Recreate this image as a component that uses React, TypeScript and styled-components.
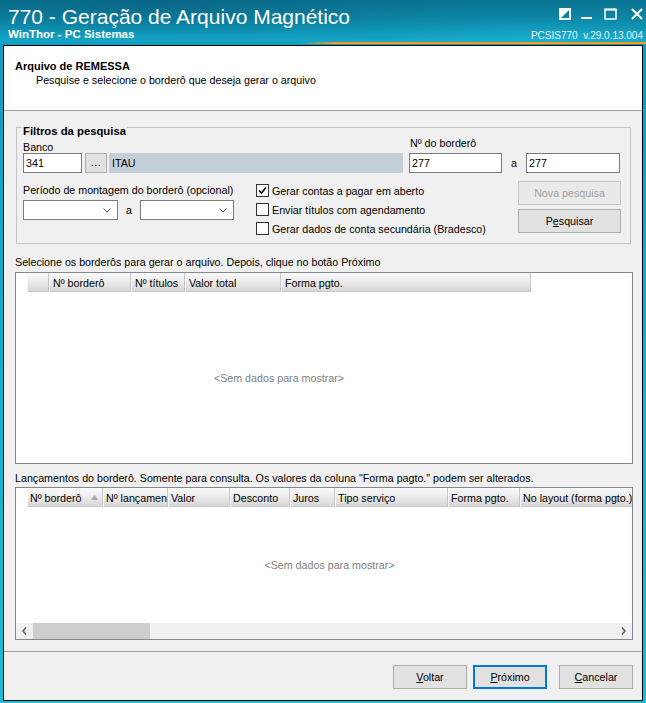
import React from 'react';
import styled, { createGlobalStyle } from 'styled-components';

const GlobalStyle = createGlobalStyle`
  html, body {
    margin: 0;
    padding: 0;
  }
  body {
    font-family: "Liberation Sans", Arial, sans-serif;
    font-size: 10.7px;
    color: #000;
    background: #f0f0f0;
  }
  * {
    box-sizing: border-box;
  }
`;

const Window = styled.div`
  width: 646px;
  height: 703px;
  display: flex;
  flex-direction: column;
  overflow: hidden;
  background: linear-gradient(180deg, #0e9cc0 0%, #12b3d1 60%, #19bdd6 100%);
`;

const TitleBar = styled.div`
  height: 42px;
  flex-shrink: 0;
  display: flex;
  justify-content: space-between;
  color: #fff;
  background:
    radial-gradient(ellipse 420px 46px at 150px 2px, rgba(8, 92, 122, 0.55), transparent 75%),
    radial-gradient(ellipse 260px 40px at 540px 46px, rgba(40, 190, 222, 0.45), transparent 75%),
    linear-gradient(180deg, #0b7393 0%, #0d8aab 55%, #14a6c6 100%);
`;

const TitleText = styled.div`
  padding: 5px 0 0 8px;
  display: flex;
  flex-direction: column;
`;

const AppTitle = styled.div`
  font-size: 21px;
  line-height: 23px;
  white-space: nowrap;
`;

const AppVendor = styled.div`
  font-size: 11.5px;
  line-height: 13px;
  font-weight: bold;
`;

const TitleSide = styled.div`
  padding: 8px 3px 0 0;
  display: flex;
  flex-direction: column;
  align-items: flex-end;
`;

const WinButtons = styled.div`
  height: 12px;
  display: flex;
  align-items: flex-start;
`;

const WinIcon = styled.svg<{ $gap: number }>`
  display: block;
  margin-left: ${(p) => p.$gap}px;
`;

const Version = styled.div`
  margin-top: 10px;
  font-size: 10px;
  line-height: 12px;
  color: #e6f6fa;
  white-space: pre;
`;

const OrangeStrip = styled.div`
  height: 2px;
  flex-shrink: 0;
  background: linear-gradient(90deg, transparent 0, transparent 300px, #f39a1f 335px, #f39a1f 100%);
`;

const Client = styled.div`
  flex: 1;
  margin: 1px 3px 2px;
  border: 1px solid #000;
  background: #f0f0f0;
  display: flex;
  flex-direction: column;
`;

const Header = styled.div`
  height: 65px;
  flex-shrink: 0;
  background: #fff;
  border-bottom: 1px solid #a0a0a0;
  padding: 13px 0 0 11px;
`;

const HeaderTitle = styled.div`
  font-size: 11px;
  font-weight: bold;
  line-height: 14px;
`;

const HeaderHint = styled.div`
  margin-left: 21px;
  line-height: 14px;
`;

const Body = styled.div`
  padding: 0 9px 0 11px;
  display: flex;
  flex-direction: column;
`;

const GroupBox = styled.div`
  position: relative;
  height: 117px;
  margin: 16px 2px 0 1px;
  padding: 10px 9px 0 6px;
  border: 1px solid #c4c4c4;
`;

const GroupLegend = styled.span`
  position: absolute;
  top: -4px;
  left: 5px;
  padding: 0 1px;
  background: #f0f0f0;
  font-size: 11.3px;
  font-weight: bold;
  line-height: 14px;
`;

const FieldRow = styled.div<{ $top?: number }>`
  display: flex;
  align-items: flex-start;
  margin-top: ${(p) => p.$top ?? 0}px;
`;

const Field = styled.div<{ $top?: number; $left?: number; $w?: number }>`
  display: flex;
  flex-direction: column;
  flex-shrink: 0;
  width: ${(p) => (p.$w ? `${p.$w}px` : 'auto')};
  padding-top: ${(p) => p.$top ?? 0}px;
  margin-left: ${(p) => p.$left ?? 0}px;
`;

const FieldLabel = styled.div<{ $gap?: number; $indent?: number }>`
  line-height: 11px;
  margin-bottom: ${(p) => p.$gap ?? 0}px;
  padding-left: ${(p) => p.$indent ?? 0}px;
  white-space: nowrap;
`;

const Inline = styled.div`
  display: flex;
  align-items: center;
`;

const TextBox = styled.div<{ $w: number; $readOnly?: boolean }>`
  width: ${(p) => p.$w}px;
  height: 20px;
  padding-left: 2px;
  line-height: 18px;
  border: 1px solid ${(p) => (p.$readOnly ? '#c4ccd4' : '#7a7a7a')};
  background: ${(p) => (p.$readOnly ? '#c3ced8' : '#fff')};
`;

const LookupButton = styled.div`
  width: 22px;
  height: 20px;
  margin: 0 2px 0 3px;
  border: 1px solid #adadad;
  background: #e1e1e1;
  text-align: center;
  line-height: 16px;
  letter-spacing: 0.5px;
`;

const Between = styled.span<{ $w: number }>`
  width: ${(p) => p.$w}px;
  text-align: center;
`;

const Combo = styled.div<{ $w: number }>`
  width: ${(p) => p.$w}px;
  height: 20px;
  border: 1px solid #7a7a7a;
  background: #fff;
  display: flex;
  align-items: center;
  justify-content: flex-end;
  padding-right: 6px;
`;

const Checks = styled.div`
  margin-left: 22px;
  display: flex;
  flex-direction: column;
`;

const CheckRow = styled.div`
  height: 19px;
  display: flex;
  align-items: center;
  gap: 3px;
  white-space: nowrap;
`;

const CheckBox = styled.span`
  width: 13px;
  height: 13px;
  border: 1px solid #333;
  background: #fff;
  display: flex;
  align-items: center;
  justify-content: center;
`;

const ActionStack = styled.div`
  margin-left: auto;
  display: flex;
  flex-direction: column;
  gap: 4px;
`;

const Button = styled.button<{ $w: number; $default?: boolean; $gap?: number }>`
  width: ${(p) => p.$w}px;
  height: 24px;
  margin: 0 0 0 ${(p) => p.$gap ?? 0}px;
  padding: 0;
  font: inherit;
  color: #000;
  background: #e1e1e1;
  border: ${(p) => (p.$default ? '2px solid #0078d7' : '1px solid #adadad')};

  &:disabled {
    color: #a0a0a0;
    background: #e9e9e9;
    border-color: #c6c6c6;
  }
`;

const Caption = styled.div<{ $top: number; $bottom: number }>`
  line-height: 13px;
  margin: ${(p) => p.$top}px 0 ${(p) => p.$bottom}px;
  white-space: nowrap;
`;

const Grid = styled.div<{ $h: number }>`
  height: ${(p) => p.$h}px;
  border: 1px solid #828790;
  background: #fff;
  display: flex;
  flex-direction: column;
  overflow: hidden;
`;

const HeaderRow = styled.div`
  height: 19px;
  flex-shrink: 0;
  display: flex;
  overflow: hidden;
`;

const Indicator = styled.div`
  width: 11px;
  flex-shrink: 0;
  background: #fff;
`;

const HeadCell = styled.div<{ $w: number; $pad: number }>`
  width: ${(p) => p.$w}px;
  flex-shrink: 0;
  display: flex;
  align-items: center;
  justify-content: space-between;
  padding: 0 4px 0 ${(p) => p.$pad}px;
  white-space: nowrap;
  overflow: hidden;
  background: linear-gradient(180deg, #fafafa 0%, #ececec 45%, #d4d4d4 100%);
  border-right: 1px solid #c6c6c6;
  box-shadow: inset 1px 0 #f8f8f8, inset 0 -1px #c8c8c8;
`;

const GridBody = styled.div`
  flex: 1;
  display: flex;
  align-items: center;
  padding-left: 11px;
`;

const EmptyText = styled.div<{ $span: number }>`
  width: min(${(p) => p.$span}px, 100%);
  text-align: center;
  color: #808080;
`;

const HScroll = styled.div`
  height: 16px;
  flex-shrink: 0;
  display: flex;
  align-items: center;
  background: #f0f0f0;
`;

const ScrollArrow = styled.div`
  width: 17px;
  height: 16px;
  display: flex;
  align-items: center;
  justify-content: center;
`;

const ScrollThumb = styled.div`
  width: 117px;
  height: 16px;
  background: #cdcdcd;
`;

const ScrollTrack = styled.div`
  flex: 1;
`;

const Footer = styled.div`
  margin-top: 11px;
  height: 49px;
  border-top: 1px solid #a0a0a0;
  padding: 13px 9px 0 0;
  display: flex;
  justify-content: flex-end;
  align-items: flex-start;
`;

type Column = { title: string; width: number; sort?: boolean };

const borderoColumns: Column[] = [
  { title: '', width: 22 },
  { title: 'Nº borderô', width: 82 },
  { title: 'Nº títulos', width: 54 },
  { title: 'Valor total', width: 96 },
  { title: 'Forma pgto.', width: 250 },
];

const lancamentoColumns: Column[] = [
  { title: 'Nº borderô', width: 76, sort: true },
  { title: 'Nº lançamen', width: 65 },
  { title: 'Valor', width: 62 },
  { title: 'Desconto', width: 60 },
  { title: 'Juros', width: 45 },
  { title: 'Tipo serviço', width: 113 },
  { title: 'Forma pgto.', width: 72 },
  { title: 'No layout (forma pgto.)', width: 140 },
];

const Chevron = () => (
  <svg width="8" height="5" viewBox="0 0 8 5">
    <path d="M0.5 0.5 L4 4 L7.5 0.5" fill="none" stroke="#555" strokeWidth="1" />
  </svg>
);

const CheckMark = () => (
  <svg width="9" height="9" viewBox="0 0 9 9">
    <path d="M1 4.5 L3.5 7 L8 1.5" fill="none" stroke="#000" strokeWidth="1.6" />
  </svg>
);

const SortUp = () => (
  <svg width="7" height="5" viewBox="0 0 7 5">
    <path d="M3.5 0 L7 5 H0 Z" fill="#a8a8a8" />
  </svg>
);

const ArrowLeft = () => (
  <svg width="5" height="8" viewBox="0 0 5 8">
    <path d="M4 0.5 L1 4 L4 7.5" fill="none" stroke="#606060" strokeWidth="1.6" />
  </svg>
);

const ArrowRight = () => (
  <svg width="5" height="8" viewBox="0 0 5 8">
    <path d="M1 0.5 L4 4 L1 7.5" fill="none" stroke="#606060" strokeWidth="1.6" />
  </svg>
);

const Check = ({ checked, children }: { checked?: boolean; children: React.ReactNode }) => (
  <CheckRow>
    <CheckBox>{checked && <CheckMark />}</CheckBox>
    <span>{children}</span>
  </CheckRow>
);

const DataGrid = ({
  columns,
  height,
  pad,
  scroll,
}: {
  columns: Column[];
  height: number;
  pad: number;
  scroll?: boolean;
}) => {
  const span = columns.reduce((sum, c) => sum + c.width, 0);
  return (
    <Grid $h={height}>
      <HeaderRow>
        <Indicator />
        {columns.map((c, i) => (
          <HeadCell key={i} $w={c.width} $pad={pad}>
            <span>{c.title}</span>
            {c.sort && <SortUp />}
          </HeadCell>
        ))}
      </HeaderRow>
      <GridBody>
        <EmptyText $span={span}>&lt;Sem dados para mostrar&gt;</EmptyText>
      </GridBody>
      {scroll && (
        <HScroll>
          <ScrollArrow>
            <ArrowLeft />
          </ScrollArrow>
          <ScrollThumb />
          <ScrollTrack />
          <ScrollArrow>
            <ArrowRight />
          </ScrollArrow>
        </HScroll>
      )}
    </Grid>
  );
};

const App = () => (
  <>
    <GlobalStyle />
    <Window>
      <TitleBar>
        <TitleText>
          <AppTitle>770 - Geração de Arquivo Magnético</AppTitle>
          <AppVendor>WinThor - PC Sistemas</AppVendor>
        </TitleText>
        <TitleSide>
          <WinButtons>
            <WinIcon $gap={0} width="12" height="12" viewBox="0 0 12 12">
              <rect x="1" y="1" width="10" height="10" fill="none" stroke="#fff" strokeWidth="2" />
              <path d="M1 1 H11 L1 11 Z" fill="#fff" />
            </WinIcon>
            <WinIcon $gap={10} width="11" height="12" viewBox="0 0 11 12">
              <rect x="0" y="9" width="11" height="2" fill="#fff" />
            </WinIcon>
            <WinIcon $gap={12} width="13" height="12" viewBox="0 0 13 12">
              <rect x="1" y="1.5" width="11" height="9.5" fill="none" stroke="#fff" strokeWidth="1.5" />
              <rect x="0.5" y="0.5" width="12" height="2" fill="#fff" />
            </WinIcon>
            <WinIcon $gap={14} width="12" height="12" viewBox="0 0 12 12">
              <path d="M1 1 L11 11 M11 1 L1 11" stroke="#fff" strokeWidth="2" />
            </WinIcon>
          </WinButtons>
          <Version>PCSIS770  v.29.0.13.004</Version>
        </TitleSide>
      </TitleBar>
      <OrangeStrip />

      <Client>
        <Header>
          <HeaderTitle>Arquivo de REMESSA</HeaderTitle>
          <HeaderHint>Pesquise e selecione o borderô que deseja gerar o arquivo</HeaderHint>
        </Header>

        <Body>
          <GroupBox>
            <GroupLegend>Filtros da pesquisa</GroupLegend>
            <FieldRow>
              <Field $top={4}>
                <FieldLabel>Banco</FieldLabel>
                <Inline>
                  <TextBox $w={59}>341</TextBox>
                  <LookupButton>...</LookupButton>
                  <TextBox $w={294} $readOnly>
                    ITAU
                  </TextBox>
                </Inline>
              </Field>
              <Field $left={6}>
                <FieldLabel $gap={4} $indent={1}>
                  Nº do borderô
                </FieldLabel>
                <Inline>
                  <TextBox $w={93}>277</TextBox>
                  <Between $w={24}>a</Between>
                  <TextBox $w={94}>277</TextBox>
                </Inline>
              </Field>
            </FieldRow>

            <FieldRow $top={8}>
              <Field $top={4} $w={211}>
                <FieldLabel $gap={4}>Período de montagem do borderô (opcional)</FieldLabel>
                <Inline>
                  <Combo $w={95}>
                    <Chevron />
                  </Combo>
                  <Between $w={22}>a</Between>
                  <Combo $w={94}>
                    <Chevron />
                  </Combo>
                </Inline>
              </Field>
              <Checks>
                <Check checked>Gerar contas a pagar em aberto</Check>
                <Check>Enviar títulos com agendamento</Check>
                <Check>Gerar dados de conta secundária (Bradesco)</Check>
              </Checks>
              <ActionStack>
                <Button $w={103} disabled>
                  Nova pesquisa
                </Button>
                <Button $w={103}>
                  P<u>e</u>squisar
                </Button>
              </ActionStack>
            </FieldRow>
          </GroupBox>

          <Caption $top={12} $bottom={3}>
            Selecione os borderôs para gerar o arquivo. Depois, clique no botão Próximo
          </Caption>
          <DataGrid columns={borderoColumns} height={192} pad={4} />

          <Caption $top={8} $bottom={2}>
            Lançamentos do borderô. Somente para consulta. Os valores da coluna "Forma pagto." podem ser alterados.
          </Caption>
          <DataGrid columns={lancamentoColumns} height={153} pad={3} scroll />
        </Body>

        <Footer>
          <Button $w={74}>
            <u>V</u>oltar
          </Button>
          <Button $w={74} $gap={6} $default>
            <u>P</u>róximo
          </Button>
          <Button $w={74} $gap={12}>
            <u>C</u>ancelar
          </Button>
        </Footer>
      </Client>
    </Window>
  </>
);

export default App;
